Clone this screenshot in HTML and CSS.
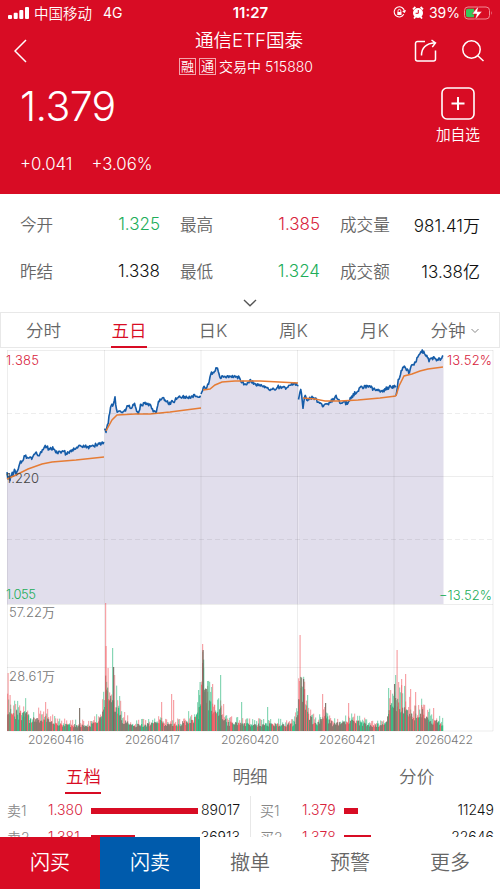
FILE: index.html
```
<!DOCTYPE html>
<html lang="zh-CN">
<head>
    <meta charset="utf-8">
    <title>通信ETF国泰 515880</title>
    <link rel="stylesheet" href="styles.css">
</head>
<body>
    <header class="header">
        <div class="status">
            <div class="status-left">
                <svg width="21" height="14" viewBox="0 0 21 14" fill="#fff"><rect x="0" y="9" width="4" height="4" rx="1"/><rect x="5.7" y="6.7" width="4" height="6.3" rx="1"/><rect x="11.3" y="4" width="4" height="9" rx="1"/><rect x="17" y="1" width="4" height="12" rx="1"/></svg>
                <span class="carrier">中国移动</span>
                <span>4G</span>
            </div>
            <div class="clock">11:27</div>
            <div class="status-right">
                <svg width="13" height="13" viewBox="0 0 13 13" fill="none" stroke="#fff"><path d="M10.8 8.3a5.1 5.1 0 1 1 .6-2.9M9.7 5.2l1.8 1 1-1.9" stroke-width="1.1"/><rect x="4.3" y="6" width="4.2" height="3" fill="#fff" stroke="none"/><path d="M5 6V4.8a1.4 1.4 0 0 1 2.8 0V6" stroke-width=".9"/></svg>
                <svg class="alarm" width="12" height="13" viewBox="0 0 12 13"><circle cx="6" cy="7" r="5" fill="#fff"/><path d="M1 3.3L3.4 1M11 3.3L8.6 1M2 12.5l1.4-1.7M10 12.5l-1.4-1.7" stroke="#fff" stroke-width="1.8"/><path d="M6.3 4v3.3H3.6" fill="none" stroke="#d80c24"/></svg>
                <span>39%</span>
                <svg class="battery" width="29" height="16" viewBox="0 0 29 16"><rect x=".5" y="2" width="25" height="12" rx="3.5" fill="none" stroke="#f08a94"/><path d="M4 3.8h6v8.4H4A2 2 0 0 1 2 10V6a2 2 0 0 1 2-2.2z" fill="#35c759"/><path d="M27 6v4q1.5-2 0-4" fill="#f08a94"/><path d="M14.5 1L8 9h4.6L11 15l7-8.4h-4.6z" fill="#fff" stroke="#d80c24" stroke-width=".5"/></svg>
            </div>
        </div>

        <div class="nav">
            <svg class="back" width="14" height="24" viewBox="0 0 14 24"><path d="M12 1L1 12l11 11"/></svg>
            <div class="title">
                <h1>通信ETF国泰</h1>
                <p><i>融</i><i>通</i>交易中 515880</p>
            </div>
            <div class="nav-icons">
                <svg width="24" height="24" viewBox="0 0 24 24"><path d="M11 2.5H3.5a2 2 0 0 0-2 2V20a2 2 0 0 0 2 2h16a2 2 0 0 0 2-2v-8.5M7.5 16.5C7.5 9 12 4.5 21 3.8M17.5 1l4 2.8-3.2 4.3"/></svg>
                <svg width="24" height="24" viewBox="0 0 24 24"><circle cx="10.5" cy="10.5" r="8.7"/><path d="M16.8 16.8l5.7 5.2"/></svg>
            </div>
        </div>

        <div class="quote">
            <div>
                <div class="price">1.379</div>
                <div class="change"><span>+0.041</span><span>+3.06%</span></div>
            </div>
            <div class="add">
                <svg width="34" height="33" viewBox="0 0 34 33"><rect x="1" y="1" width="32" height="31" rx="5"/><path d="M10.5 16.5h13M17 10v13" stroke-width="2"/></svg>
                <span>加自选</span>
            </div>
        </div>
    </header>

    <section class="stats">
        <div><span>今开</span><b class="down">1.325</b></div>
        <div><span>最高</span><b class="up">1.385</b></div>
        <div><span>成交量</span><b>981.41万</b></div>
        <div><span>昨结</span><b>1.338</b></div>
        <div><span>最低</span><b class="down">1.324</b></div>
        <div><span>成交额</span><b>13.38亿</b></div>
    </section>
    <div class="expand">
        <svg width="14" height="8" viewBox="0 0 14 8"><path d="M1 1l6 5.7L13 1" fill="none" stroke="#555" stroke-width="1.4"/></svg>
    </div>

    <nav class="periods">
        <span>分时</span>
        <span class="active">五日</span>
        <span>日K</span>
        <span>周K</span>
        <span>月K</span>
        <span>分钟<svg width="8" height="6" viewBox="0 0 8 6"><path d="M.5 1L4 4.5 7.5 1" fill="none" stroke="#888"/></svg></span>
    </nav>

    <svg class="chart" width="500" height="400" viewBox="0 348 500 400">
        <g id="chart"></g>
        <g class="labels">
            <text class="up" x="6" y="365" textLength="33">1.385</text>
            <text x="6" y="483" textLength="33">1.220</text>
            <text class="down" x="6" y="599" textLength="30">1.055</text>
            <text class="up" x="447" y="365" textLength="45">13.52%</text>
            <text class="down" x="439" y="600" textLength="53">−13.52%</text>
            <text class="vol" x="9" y="617" textLength="46">57.22万</text>
            <text class="vol" x="9" y="681" textLength="46">28.61万</text>
        </g>
        <g class="dates">
            <text x="28" y="744" textLength="56">20260416</text>
            <text x="125" y="744" textLength="55">20260417</text>
            <text x="221" y="744" textLength="58">20260420</text>
            <text x="319" y="744" textLength="56">20260421</text>
            <text x="415" y="744" textLength="58">20260422</text>
        </g>
    </svg>

    <nav class="tabs">
        <span class="active">五档</span>
        <span>明细</span>
        <span>分价</span>
    </nav>

    <section class="book">
        <div class="side sell">
            <div class="row"><span>卖1</span><em>1.380</em><div class="depth"><div style="width: 107px"></div></div><b>89017</b></div>
            <div class="row"><span>卖2</span><em>1.381</em><div class="depth"><div style="width: 44px"></div></div><b>36913</b></div>
        </div>
        <div class="side buy">
            <div class="row"><span>买1</span><em>1.379</em><div class="depth"><div style="width: 14px"></div></div><b>11249</b></div>
            <div class="row"><span>买2</span><em>1.378</em><div class="depth"><div style="width: 27px"></div></div><b>22646</b></div>
        </div>
    </section>

    <footer class="actions">
        <span class="buy-btn">闪买</span>
        <span class="sell-btn">闪卖</span>
        <span>撤单</span>
        <span>预警</span>
        <span>更多</span>
    </footer>
    <script src="chart.js"></script>
</body>
</html>
```
FILE: styles.css
```
*{
    box-sizing: border-box;
}
body{
    margin: 0;
    width: 500px;
    height: 889px;
    overflow: hidden;
    display: flex;
    flex-direction: column;
    background: #fff;
    color: #666;
    font-family: Inter, "Noto Sans CJK SC", sans-serif;
    font-weight: 350;
}
b, i, em, h1, p{
    margin: 0;
    font-weight: inherit;
    font-style: normal;
}
.up{
    color: #d8233c;
    fill: #d8233c;
}
.down{
    color: #20ad59;
    fill: #20ad59;
}

/* header */
.header{
    height: 194px;
    flex: none;
    background: #d80c24;
    color: #fff;
}
.status{
    height: 25px;
    padding: 0 7px 0 8px;
    display: grid;
    grid-template-columns: 1fr auto 1fr;
    align-items: center;
    font-size: 14px;
    font-weight: 400;
}
.status-left, .status-right{
    display: flex;
    align-items: center;
}
.status-right{
    justify-content: flex-end;
}
.carrier{
    margin: 0 11px 0 5px;
    font-size: 14.5px;
    font-weight: 350;
}
.clock{
    font-size: 15px;
    font-weight: 600;
}
.alarm{
    margin: 0 5px 0 6px;
}
.battery{
    margin-left: 4px;
}
.nav{
    height: 55px;
    padding: 0 16px 0 14px;
    display: grid;
    grid-template-columns: 80px 1fr 80px;
    align-items: center;
}
.nav svg{
    fill: none;
    stroke: #fff;
    stroke-width: 1.5;
}
.title{
    text-align: center;
}
.title h1{
    font-size: 18.6px;
    line-height: 28px;
}
.title p{
    display: flex;
    justify-content: center;
    align-items: center;
    font-size: 14px;
    line-height: 26px;
    margin-left: -6px;
}
.title i{
    width: 17px;
    height: 17px;
    margin-right: 3px;
    border: 1px solid #f3a5ad;
    font-size: 13px;
    line-height: 15px;
}
.nav-icons{
    display: flex;
    justify-content: flex-end;
    gap: 23px;
    margin: -4px -1px 0 0;
}
.back{
    margin-top: -4px;
}
.quote{
    display: flex;
    justify-content: space-between;
    padding: 0 20px;
}
.price{
    height: 52px;
    font-size: 41px;
    font-weight: 300;
    line-height: 52px;
    letter-spacing: -.6px;
}
.change{
    display: flex;
    gap: 19px;
    margin-top: 21px;
    font-size: 16.8px;
    line-height: 22px;
}
.add{
    display: flex;
    flex-direction: column;
    align-items: center;
    padding-top: 7px;
    font-size: 14.7px;
    line-height: 31px;
}
.add svg{
    fill: none;
    stroke: #fff;
    stroke-width: 1.6;
}

/* figures */
.stats{
    display: grid;
    grid-template-columns: repeat(3, 140px);
    grid-auto-rows: 46.5px;
    column-gap: 20px;
    padding: 7px 20px 0;
    font-size: 16.6px;
}
.stats div{
    display: flex;
    justify-content: space-between;
    align-items: center;
}
.stats b{
    font-size: 17px;
}
.stats b:not([class]){
    color: #111;
}
.expand{
    height: 18px;
    display: flex;
    justify-content: center;
    align-items: center;
}
.periods{
    height: 36px;
    flex: none;
    display: grid;
    grid-template-columns: 85px 86px 82px 79px 83px 77px;
    border: 1px solid #e8e8e8;
    font-size: 17.6px;
    line-height: 35px;
    text-align: center;
}
.periods svg{
    margin: 0 0 3px 5px;
}
.active{
    color: #d80c24;
    position: relative;
}
.active::after{
    content: "";
    position: absolute;
    left: 50%;
    bottom: 0;
    width: 36px;
    height: 2px;
    margin-left: -18px;
    background: #d80c24;
}

/* chart */
.chart{
    display: block;
    flex: none;
}
.grid{
    fill: none;
    stroke: #000;
    stroke-opacity: .07;
}
.dashed{
    stroke-dasharray: 5 3;
}
.area{
    fill: #e1deec;
}
.line{
    fill: none;
    stroke: #155ca8;
    stroke-width: 1.6;
    stroke-linejoin: round;
}
.avg{
    fill: none;
    stroke: #e67c35;
    stroke-width: 1.5;
}
.labels{
    fill: #444;
    font-size: 13px;
}
.labels .vol{
    fill: #777;
}
.dates{
    fill: #777;
    font-size: 12.2px;
}

/* order book */
.tabs{
    height: 46px;
    flex: none;
    display: grid;
    grid-template-columns: repeat(3, 1fr);
    font-size: 17.6px;
    line-height: 57px;
    text-align: center;
}
.tabs .active::after{
    bottom: 0;
    top: 44px;
}
.book{
    height: 43px;
    flex: none;
    display: flex;
    overflow: hidden;
    font-size: 14px;
}
.side{
    width: 250px;
    padding: 2px 10px 0 7px;
}
.buy{
    margin-top: 2px;
    padding: 0 6px 0 9px;
    border-left: 1px solid #e8e8e8;
}
.row{
    height: 27px;
    display: grid;
    grid-template-columns: 41px 43px 1fr auto;
    align-items: center;
}
.buy .row{
    grid-template-columns: 42px 42px 1fr auto;
}
.row span{
    color: #888;
}
.row em{
    color: #d8233c;
}
.row b{
    color: #111;
}
.depth div{
    height: 6px;
    margin-top: 2px;
    background: #d80c24;
}
.actions{
    height: 52px;
    flex: none;
    display: grid;
    grid-template-columns: repeat(5, 1fr);
    background: #fff;
    font-size: 20px;
    line-height: 52px;
    text-align: center;
}
.buy-btn{
    background: #d80c24;
    color: #fff;
}
.sell-btn{
    background: #005bac;
    color: #fff;
}
```
FILE: chart.js
```
// x,y pairs for each trading day
var prices = [
    [7,474, 8,480, 9,476, 10,481, 12,471, 13,476, 15,469, 16,473, 18,471, 20,463, 22,461, 25,456, 28,458, 31,459, 33,455, 36,452, 38,457, 41,453, 43,450, 46,446, 49,449, 53,448, 56,452, 60,453, 64,451, 66,454, 70,451, 75,448, 79,446, 84,447, 90,447, 96,445, 104.5,443],
    [104.5,429, 106,432, 108,423, 110,411, 111,404, 113,407, 115,398, 117,412, 119,411, 122,413, 125,411, 128,406, 131,407, 135,404, 138,414, 141,404, 145,404, 150,405, 153,410, 156,412, 159,401, 163,398, 169,404, 174,401, 180,396, 186,398, 192,396, 201,397],
    [201,393, 203,388, 207,387, 209,381, 211,374, 214,371, 217,368, 220,378, 223,376, 230,377, 238,377, 241,381, 246,386, 250,381, 256,384, 265,387, 272,390, 278,387, 285,388, 292,384, 298.5,384],
    [298.5,400, 301,388, 303,407, 305,396, 307,400, 310,398, 315,398, 321,405, 325,406, 330,402, 336,397, 340,402, 347,403, 354,394, 360,388, 368,386, 374,389, 382,391, 390,387, 396,386],
    [396,396, 398,382, 401,372, 404,366, 406,368, 409,373, 412,364, 415,363, 418,357, 422,351, 426,355, 429,361, 433,358, 437,360, 440,359, 443.5,355]
];
var averages = [
    [7,479, 16,475, 28,469, 42,464, 52,462, 76,460, 104,457],
    [106,431, 112,420, 117,415, 135,414, 150,414, 170,412, 201,408],
    [203,390, 210,389, 215,385, 222,382, 235,381, 260,381, 298,383],
    [303,398, 315,399, 325,401, 340,401, 358,400, 380,398, 396,396],
    [396,396, 399,386, 404,376, 412,374, 420,371, 428,369, 443,367]
];
// usual height of the volume bars along x
var envelope = [7,28, 12,20, 24,22, 31,13, 40,16, 47,16, 55,9, 72,7, 90,8, 98,14, 103,25, 105,66, 107,44, 112,47, 116,30, 122,15, 130,7, 150,8, 160,12, 168,7, 180,9, 195,16, 200,28, 202,84, 205,50, 208,34, 212,29, 220,24, 226,10, 250,8, 270,8, 292,8, 297,16, 299,55, 304,53, 307,20, 315,9, 325,18, 333,8, 352,12, 370,7, 385,8, 393,38, 400,31, 406,27, 416,18, 422,22, 430,13, 443,9];
var spikes = [
    [7.5,58,'r'], [9.5,36,'r'], [45,29,'r'], [79,23,'k'], [105,128,'r'], [105.5,85,'r'],
    [107.5,63,'r'], [112,83,'g'], [113,64,'k'], [161,29,'r'], [171,37,'r'], [173,31,'r'],
    [198,41,'g'], [199.5,49,'g'], [202,87,'r'], [202.5,81,'k'], [207,50,'g'], [212,47,'r'],
    [220,56,'g'], [241,29,'g'], [267,24,'g'], [299.5,96,'r'], [303,52,'k'], [307,36,'g'],
    [322,37,'r'], [325,28,'k'], [348,28,'r'], [388,43,'g'], [394,47,'k'], [396.5,81,'r'],
    [401,52,'r'], [405,57,'r'], [410,42,'r'], [415,39,'r'], [421,26,'r'], [433,23,'r']
];
var colors = {r: '#f0555d', g: '#25b578', k: '#75695f'};

var seed = 42;
function rnd(){
    seed = (seed * 16807) % 2147483647;
    return seed / 2147483647;
}

function at(p, x){
    for (var i = 2; i < p.length; i += 2){
        if (x <= p[i]){
            var k = (x - p[i-2]) / (p[i] - p[i-2]);
            return p[i-1] + k * (p[i+1] - p[i-1]);
        }
    }
    return p[p.length - 1];
}

var out = '';
prices.forEach(function(p, i){
    var end = p[p.length - 2];
    // fill up to where the next day starts
    var edge = prices[i+1] ? prices[i+1][0] : end;
    var pts = [];
    for (var x = p[0]; x <= end; x += 0.75){
        pts.push(x + ',' + (at(p, x) + (rnd() - 0.5) * 3.6).toFixed(1));
    }
    out += '<polygon class="area" points="' + p[0] + ',604 ' + pts.join(' ') + ' ' + edge + ',' + p[p.length-1] + ' ' + edge + ',604"/>';
    out += '<polyline class="line" points="' + pts.join(' ') + '"/>';
});
averages.forEach(function(p){
    out += '<polyline class="avg" points="' + p.join(' ') + '"/>';
});
out += '<path class="grid" d="M7.5 350.5H493M7 476.5H493M7 604.5H493M7 667.5H493M7 731H493M7.5 350V731M104.5 350V731M201 350V731M297.5 350V731M394 350V731M493 350V731"/>';
out += '<path class="grid dashed" d="M7 413.5H493M7 539.5H493"/>';

function bar(x, h, c, o){
    out += '<rect x="' + x + '" y="' + (731 - h).toFixed(1) + '" width="1.2" height="' + h.toFixed(1) + '" fill="' + colors[c] + '" opacity="' + o + '"/>';
}
for (var x = 7; x < 443; x++){
    var h = at(envelope, x);
    var c = rnd() < 0.5 ? 'r' : 'g';
    bar(x, h * (0.6 + rnd() * (h > 40 ? 0.5 : 1)), c, 0.5);
    bar(x, h * (0.5 + rnd() * 0.5), rnd() < 0.6 ? 'k' : c, 0.75);
}
spikes.forEach(function(s){
    bar(s[0], s[1], s[2], s[2] === 'k' ? 0.9 : 0.55);
});
document.getElementById('chart').innerHTML = out;
```
